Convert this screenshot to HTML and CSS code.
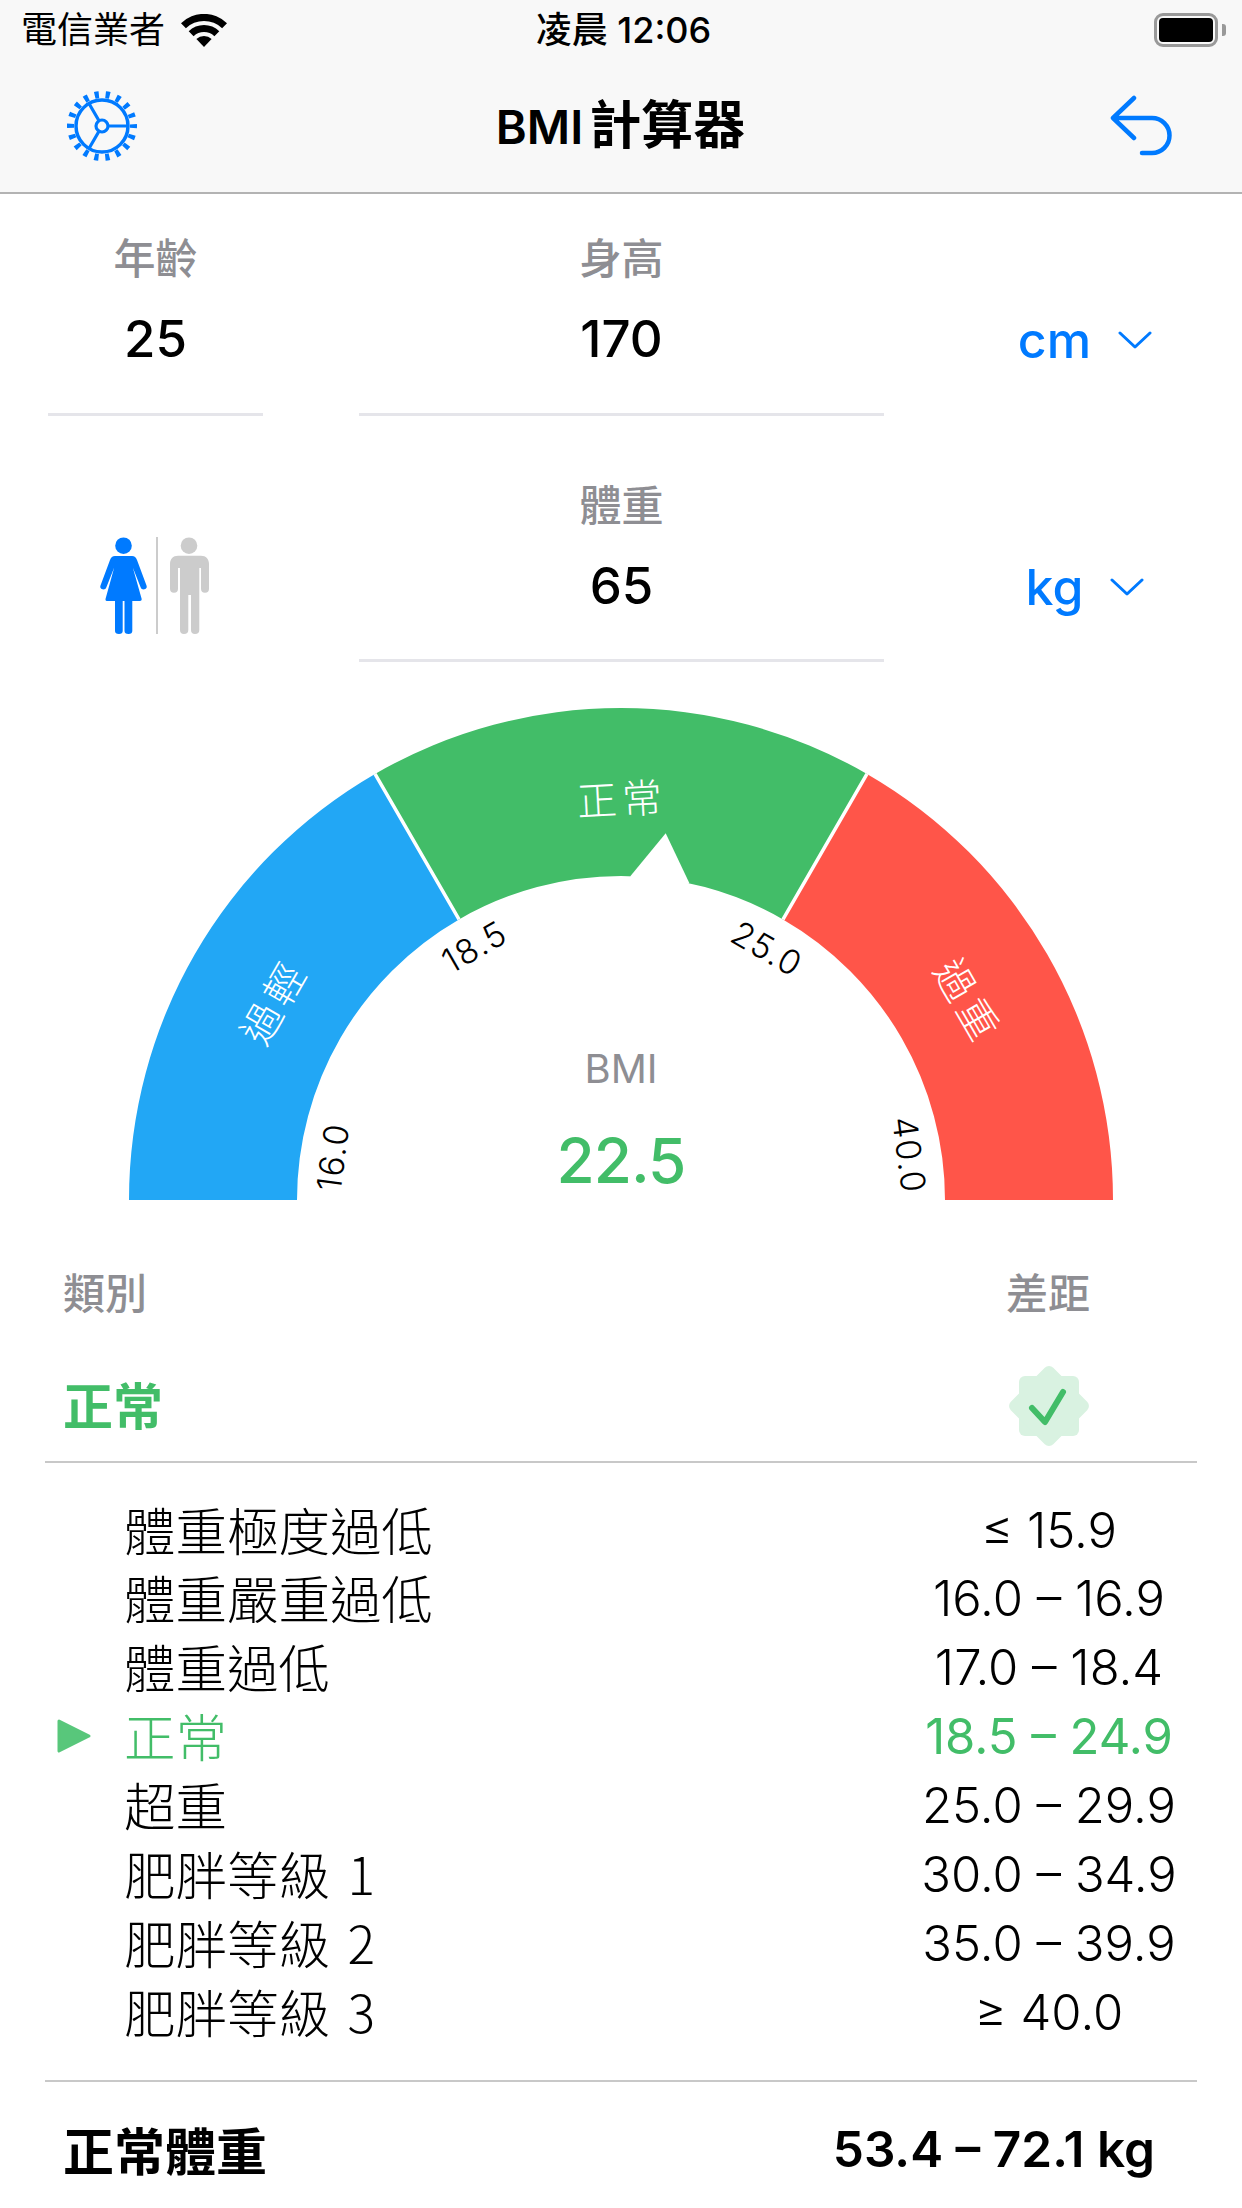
FILE: index.html
```html
<!DOCTYPE html>
<html lang="zh-Hant">
<head>
<meta charset="utf-8">
<title>BMI計算器</title>
<link rel="stylesheet" href="styles.css">
</head>
<body>
<header class="top">
  <div class="status">
    <div class="status-left">
      <span class="carrier">電信業者</span>
      <svg class="wifi" viewBox="0 0 46 33" width="46" height="33"><path d="M23 33 15.400 25.100A11 11 0 0 1 30.600 25.100Z"/><path d="M7.700 17.200A22 22 0 0 1 38.300 17.200L33.400 22.200A15 15 0 0 0 12.600 22.200Z"/><path d="M0 9.200A33 33 0 0 1 46 9.200L41.100 14.300A26 26 0 0 0 4.900 14.300Z"/></svg>
    </div>
    <div class="clock">凌晨 12:06</div>
    <div class="battery"><span class="battery-body"><span class="battery-fill"></span></span><span class="battery-cap"></span></div>
  </div>
  <nav class="nav">
    <svg class="gear" viewBox="0 0 72 72" width="72" height="72" fill="none" stroke="#007aff">
      <circle cx="36" cy="36" r="26" stroke-width="3.500"/>
      <circle cx="36" cy="36" r="31.500" stroke-width="7" stroke-dasharray="4.200 6.796" stroke-dashoffset="2.100"/>
      <circle cx="36" cy="36" r="6" stroke-width="3.200"/>
      <path d="M42 36H62M33 30.800 22.700 13M33 41.200 22.700 59" stroke-width="3.200"/>
    </svg>
    <h1 class="title"><span class="title-latin">BMI</span>計算器</h1>
    <svg class="undo" viewBox="0 0 65 62" width="65" height="62" fill="none" stroke="#007aff" stroke-width="4.500" stroke-linecap="round" stroke-linejoin="round"><path d="M24 3 3 23 24 43M3 23H42A17.500 17.500 0 0 1 42 58H32"/></svg>
  </nav>
</header>

<main class="form">
  <div class="field-row">
    <div class="field field-age"><label class="field-label">年齡</label><div class="field-value">25</div></div>
    <div class="field field-main"><label class="field-label">身高</label><div class="field-value">170</div></div>
    <div class="unit"><span>cm</span><svg class="chev" viewBox="0 0 34 20" width="34" height="20" fill="none" stroke="#007aff" stroke-width="3" stroke-linecap="round" stroke-linejoin="round"><path d="M2 3l15 14L32 3"/></svg></div>
  </div>
  <div class="field-row field-row-2">
    <div class="gender">
      <svg viewBox="0 0 112 98" width="112" height="98">
        <g fill="#007aff"><circle cx="23.500" cy="8.700" r="8.300"/><path d="M15 19H32C34.500 19 36 20.500 37 23L46.500 48.500C47.200 50.500 46.300 51.800 44.500 52.300 42.800 52.800 41.300 52 40.600 50.200L32.800 30.500 41.700 62Q41.900 64 40 64H32.300V94Q32.300 97 28.500 97 24.500 97 24.500 94V64H22.700V94Q22.700 97 19 97 15 97 15 94V64H7Q5.300 64 5.500 62L14.200 30.500 6.400 50.200C5.700 52 4.200 52.800 2.500 52.300 .7 51.800-.2 50.500 .5 48.500L10 23C11 20.500 12.500 19 15 19Z"/></g>
        <rect x="56" y="0" width="2" height="97" fill="#cccccc"/>
        <g fill="#cccccc"><circle cx="89" cy="8.700" r="8.300"/><path d="M78 18.700H101C106 18.700 109 22 109 27V51.700Q109 55.700 105 55.700 101 55.700 101 51.700V31H99.300V93Q99.300 97 95 97 91 97 91 93V58H88.300V93Q88.300 97 84 97 80 97 80 93V31H78V51.700Q78 55.700 74 55.700 70 55.700 70 51.700V27C70 22 73 18.700 78 18.700Z"/></g>
      </svg>
    </div>
    <div class="field field-main"><label class="field-label">體重</label><div class="field-value">65</div></div>
    <div class="unit"><span>kg</span><svg class="chev" viewBox="0 0 34 20" width="34" height="20" fill="none" stroke="#007aff" stroke-width="3" stroke-linecap="round" stroke-linejoin="round"><path d="M2 3l15 14L32 3"/></svg></div>
  </div>
</main>

<section class="gauge-wrap">
  <svg class="gauge" viewBox="0 0 1242 538" width="1242" height="538">
    <g transform="translate(621 538)">
      <path d="M-492 0A492 492 0 0 1-246 -426.080L-162 -280.590A324 324 0 0 0 -324 0Z" fill="#22a7f5"/>
      <path d="M-246 -426.080A492 492 0 0 1 246 -426.080L162 -280.590A324 324 0 0 0 -162 -280.590Z" fill="#42bd68"/>
      <path d="M492 0A492 492 0 0 0 246 -426.080L162 -280.590A324 324 0 0 1 324 0Z" fill="#ff5549"/>
      <path d="M-246 -426.080-162 -280.590M246 -426.080 162 -280.590" stroke="#fff" stroke-width="3.500"/>
      <path d="M9.700 -324.300 44.700 -366.700 68.300 -317 60 -310 0 -300Z" fill="#fff"/>
      <text class="g-seg" transform="rotate(-3 1 -400)" x="1" y="-386">正常</text>
      <text class="g-seg" transform="rotate(-60 -346 -198)" x="-346" y="-184">過輕</text>
      <text class="g-seg" transform="rotate(60 346 -198)" x="346" y="-184">過重</text>
      <text class="g-tick" transform="rotate(-82.500 -288 -43)" x="-288" y="-43" dy="12">16.0</text>
      <text class="g-tick" transform="rotate(-30 -146.500 -253)" x="-146.500" y="-253" dy="12">18.5</text>
      <text class="g-tick" transform="rotate(30 146 -251)" x="146" y="-251" dy="12">25.0</text>
      <text class="g-tick" transform="rotate(82.500 288 -45)" x="288" y="-45" dy="12">40.0</text>
    </g>
  </svg>
  <div class="reading">
    <div class="reading-label">BMI</div>
    <div class="reading-value">22.5</div>
  </div>
</section>

<section class="result">
  <div class="result-head"><span>類別</span><span class="col-right">差距</span></div>
  <div class="result-current">
    <span class="current-name">正常</span>
    <span class="col-right">
      <svg class="badge" viewBox="0 0 80 80" width="80" height="80">
        <g fill="#d9f2e1"><rect x="10" y="10" width="60" height="60" rx="6"/><rect x="10" y="10" width="60" height="60" rx="6" transform="rotate(45 40 40)"/></g>
        <path d="M23 42 36 56 54 26" fill="none" stroke="#42bd68" stroke-width="6" stroke-linecap="round" stroke-linejoin="round"/>
      </svg>
    </span>
  </div>
  <ul class="table">
    <li class="row"><span class="row-name">體重極度過低</span><span class="row-range">≤ 15.9</span></li>
    <li class="row"><span class="row-name">體重嚴重過低</span><span class="row-range">16.0 – 16.9</span></li>
    <li class="row"><span class="row-name">體重過低</span><span class="row-range">17.0 – 18.4</span></li>
    <li class="row row-on"><svg class="marker" viewBox="0 0 36 36" width="36" height="36"><path d="M3 3 33 18 3 33Z" fill="#58c77b" stroke="#58c77b" stroke-width="3" stroke-linejoin="round"/></svg><span class="row-name">正常</span><span class="row-range">18.5 – 24.9</span></li>
    <li class="row"><span class="row-name">超重</span><span class="row-range">25.0 – 29.9</span></li>
    <li class="row"><span class="row-name">肥胖等級 1</span><span class="row-range">30.0 – 34.9</span></li>
    <li class="row"><span class="row-name">肥胖等級 2</span><span class="row-range">35.0 – 39.9</span></li>
    <li class="row"><span class="row-name">肥胖等級 3</span><span class="row-range">≥ 40.0</span></li>
  </ul>
  <div class="normal-weight"><span class="nw-name">正常體重</span><span class="nw-value">53.4 – 72.1 kg</span></div>
</section>
</body>
</html>
```

FILE: styles.css
```css
* { box-sizing: border-box; }
html, body { margin: 0; padding: 0; }
body {
  width: 1242px;
  height: 2208px;
  overflow: hidden;
  background: #fff;
  color: #000;
  font-family: Inter, "Noto Sans CJK TC", sans-serif;
}
.top {
  height: 194px;
  background: #f8f8f8;
  border-bottom: 2px solid #b3b3b3;
}
.status {
  height: 60px;
  display: grid;
  grid-template-columns: 1fr auto 1fr;
  align-items: center;
  padding: 0 16px 0 21px;
}
.status-left { display: flex; align-items: center; gap: 16px; }
.carrier { font-size: 36px; line-height: 60px; }
.wifi { display: block; }
.clock { font-size: 36px; font-weight: 500; line-height: 60px; }
.battery { display: flex; align-items: center; justify-content: flex-end; gap: 4px; }
.battery-body { width: 64px; height: 34px; border: 3px solid #999; border-radius: 9px; padding: 2px; display: block; }
.battery-fill { display: block; height: 100%; background: #000; border-radius: 4px; }
.battery-cap { width: 4px; height: 12px; background: #999; border-radius: 0 3px 3px 0; }
.nav {
  height: 132px;
  display: grid;
  grid-template-columns: 1fr auto 1fr;
  align-items: center;
  padding: 0 67px 0 66px;
}
.title { margin: 0; font-size: 52px; font-weight: 700; line-height: 1; }
.title-latin { font-size: 47px; font-weight: 600; margin-right: 6px; }
.undo { justify-self: end; }

.form { padding: 0 48px; }
.field-row {
  display: grid;
  grid-template-columns: 215px 525px 1fr;
  column-gap: 96px;
  height: 222px;
}
.field-row-2 { height: 246px; padding-top: 25px; }
.field { border-bottom: 3px solid #e5e5ea; text-align: center; padding-top: 44px; height: 222px; }
.field-row-2 .field { height: 221px; }
.field-label { display: block; font-size: 42px; line-height: 42px; color: #8e8e93; font-weight: 500; }
.field-value { font-size: 51px; line-height: 60px; margin-top: 29px; font-weight: 500; }
.unit {
  display: flex;
  align-items: center;
  justify-content: center;
  gap: 27px;
  color: #007aff;
  font-size: 50px;
  font-weight: 450;
  margin-right: 4px;
  height: 60px;
  margin-top: 116px;
}
.gender { padding: 96px 0 0 52px; }
.gender svg { display: block; }

.gauge-wrap { position: relative; height: 538px; }
.gauge { display: block; }
.g-seg { font-size: 40px; fill: #fff; text-anchor: middle; font-family: "Noto Sans CJK TC Light", "Noto Sans CJK TC", sans-serif; font-weight: 300; letter-spacing: 5px; }
.g-tick { font-size: 34px; fill: #000; text-anchor: middle; font-family: Inter, sans-serif; font-weight: 300; letter-spacing: 1.5px; }
.reading { position: absolute; left: 0; right: 0; top: 385px; text-align: center; }
.reading-label { font-size: 40px; line-height: 44px; color: #8e8e93; }
.reading-value { font-size: 62px; line-height: 76px; margin-top: 32px; color: #42bd68; font-weight: 500; letter-spacing: -1px; }

.result { padding: 70px 45px 0; }
.result-head, .result-current, .normal-weight { display: flex; justify-content: space-between; align-items: center; }
.result-head { font-size: 42px; color: #8e8e93; line-height: 48px; padding-left: 18px; font-weight: 500; }
.col-right { width: 298px; display: flex; justify-content: center; }
.result-current { height: 112px; margin-top: 33px; padding-left: 18px; border-bottom: 2px solid #c8c8c8; }
.current-name { font-size: 50px; font-weight: 700; color: #42bd68; margin-bottom: 6px; }
.badge { display: block; margin-left: 2px; }
.table { list-style: none; margin: 0; padding: 32.6px 0 0; border-bottom: 2px solid #c8c8c8; height: 619px; }
.row { height: 68.86px; display: flex; align-items: center; justify-content: space-between; position: relative; font-size: 51.5px; padding-left: 79px; }
.row-name { font-family: "Noto Sans CJK TC Light", "Noto Sans CJK TC", sans-serif; font-weight: 300; margin-bottom: 4px; word-spacing: 6px; }
.row-range { width: 296px; text-align: center; white-space: nowrap; font-size: 49px; font-weight: 300; }
.row-on { color: #42bd68; }
.row-on .row-range { font-weight: 400; }
.marker { position: absolute; left: 11px; top: 16px; }
.normal-weight { height: 134px; padding: 0 42px 0 18px; }
.nw-name { font-size: 51px; font-weight: 700; }
.nw-value { font-size: 49.5px; font-weight: 600; }
```
